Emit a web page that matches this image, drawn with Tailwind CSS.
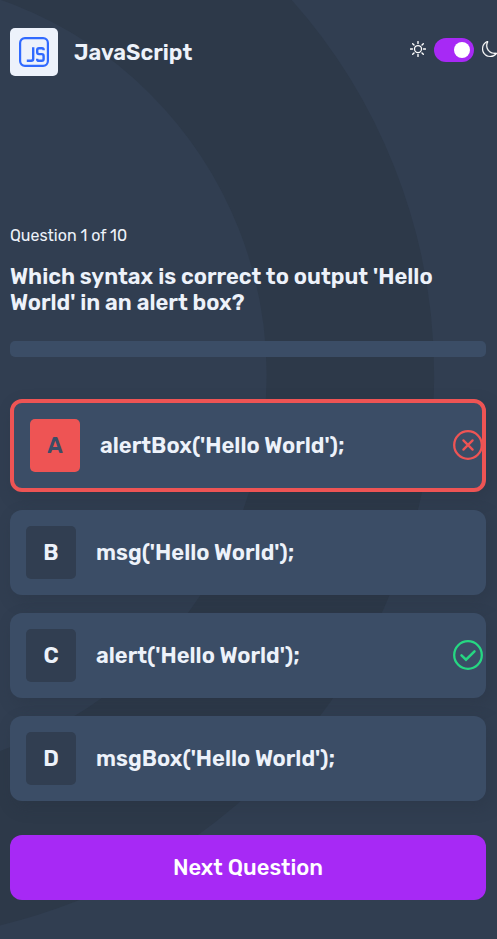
<!DOCTYPE html>
<html lang="en">
<head>
<meta charset="utf-8">
<title>Quiz</title>
<script src="https://cdn.jsdelivr.net/npm/@tailwindcss/browser@4"></script>
</head>
<body class="relative h-[939px] overflow-hidden bg-[#313e51] font-['Rubik','Roboto',sans-serif] text-[#edf2fa]">
<svg class="absolute inset-0 -z-10" width="497" height="939" fill="none"><circle cx="-131.3" cy="375.3" r="481.7" stroke="#2d3949" stroke-width="167.5"/></svg>
<header class="flex h-12 mt-7 ml-2.5 w-[488px] justify-between">
  <div class="flex items-center gap-4">
    <div class="flex size-12 items-center justify-center rounded-[5px] bg-[#edf2fb]">
      <svg width="30" height="30" viewBox="0 0 30 30" fill="none" stroke="#306aff"><rect x="1.1" y="1.1" width="27.8" height="27.8" rx="4.8" stroke-width="2.2"/><path d="M14.2 10.2V21.8Q14.2 23.8 12.2 23.8H7.8M24.6 13.2V12.8Q24.6 11.2 23 11.2H20Q18.2 11.2 18.2 13V15.3Q18.2 17.1 20 17.1H22.8Q24.6 17.1 24.6 19V22Q24.6 23.8 22.8 23.8H19.8Q18.2 23.8 18.2 22.2V21.8" stroke-width="2.4"/></svg>
    </div>
    <h1 class="pt-0.5 text-[22px] font-semibold leading-[26px]">JavaScript</h1>
  </div>
  <div class="mt-2.5 flex h-6 items-start gap-2">
    <svg class="mt-[3px]" width="16" height="16" viewBox="0 0 16 16" fill="none" stroke="#fff" stroke-linecap="round"><circle cx="8" cy="8" r="3.5" stroke-width="1.25"/><path d="M8 .6v1.9M8 13.5v1.9M.6 8h1.9M13.5 8h1.9M2.7 2.7L4 4M12 12l1.3 1.3M2.7 13.3L4 12M12 4l1.3-1.3" stroke-width="1.4"/></svg>
    <div class="flex h-6 w-10 items-center justify-end rounded-full bg-[#a729f5] pr-1"><span class="size-4 rounded-full bg-white"></span></div>
    <svg class="mt-[3px]" width="16" height="16" viewBox="0 0 16 16" fill="#fff" stroke="#fff" stroke-width=".25"><path d="M6 .278a.77.77 0 0 1 .08.858 7.2 7.2 0 0 0-.878 3.46c0 4.021 3.278 7.277 7.318 7.277q.792-.001 1.533-.16a.79.79 0 0 1 .81.316.73.73 0 0 1-.031.893A8.35 8.35 0 0 1 8.344 16C3.734 16 0 12.286 0 7.71 0 4.266 2.114 1.312 5.124.06A.75.75 0 0 1 6 .278M4.858 1.311A7.27 7.27 0 0 0 1.025 7.71c0 4.02 3.279 7.276 7.319 7.276a7.32 7.32 0 0 0 5.205-2.162q-.506.063-1.029.063c-4.61 0-8.343-3.714-8.343-8.29 0-1.167.242-2.278.681-3.286"/></svg>
  </div>
</header>
<main class="ml-2.5 w-[476px] pt-[150px]">
  <p class="text-base leading-[19px]">Question 1 of 10</p>
  <h2 class="mt-[19px] text-[22px] font-semibold leading-[26px]">Which syntax is correct to output 'Hello World' in an alert box?</h2>
  <div class="mt-[25px] h-4 rounded-[5px] bg-[#3b4d66]"></div>
  <div class="mt-[42px] flex flex-col gap-[18px] text-[22px] font-semibold">
    <div class="flex h-[93px] items-center rounded-xl border-4 border-[#ee5454] bg-[#3b4d66] pl-4 shadow-[4px_6px_16px_rgba(35,45,60,0.28)]">
      <span class="flex h-[53px] w-[50px] items-center justify-center rounded-[5px] bg-[#ee5454] text-[#3b4d66]">A</span>
      <span class="ml-5">alertBox('Hello World');</span>
      <svg class="-mr-[1px] mb-px ml-auto" width="30" height="30" viewBox="0 0 30 30" fill="none" stroke="#ee5454" stroke-width="2.3" stroke-linecap="round"><circle cx="15" cy="15" r="13.8"/><path d="M10.4 10.4l9.2 9.2M19.6 10.4l-9.2 9.2"/></svg>
    </div>
    <div class="flex h-[85px] items-center rounded-xl bg-[#3b4d66] pl-4 shadow-[4px_6px_16px_rgba(35,45,60,0.28)]">
      <span class="flex h-[53px] w-[50px] items-center justify-center rounded-[5px] bg-[#313e51]">B</span>
      <span class="ml-5">msg('Hello World');</span>
    </div>
    <div class="flex h-[85px] items-center rounded-xl bg-[#3b4d66] pl-4 shadow-[4px_6px_16px_rgba(35,45,60,0.28)]">
      <span class="flex h-[53px] w-[50px] items-center justify-center rounded-[5px] bg-[#313e51]">C</span>
      <span class="ml-5">alert('Hello World');</span>
      <svg class="mr-[3px] mb-px ml-auto" width="30" height="30" viewBox="0 0 30 30" fill="none" stroke="#26d782" stroke-width="2.3" stroke-linecap="round"><circle cx="15" cy="15" r="13.8"/><path d="M8.5 15.3l4.5 4.4 8.5-8.4" stroke-width="2.5"/></svg>
    </div>
    <div class="flex h-[85px] items-center rounded-xl bg-[#3b4d66] pl-4 shadow-[4px_6px_16px_rgba(35,45,60,0.28)]">
      <span class="flex h-[53px] w-[50px] items-center justify-center rounded-[5px] bg-[#313e51]">D</span>
      <span class="ml-5">msgBox('Hello World');</span>
    </div>
  </div>
  <button class="mt-[34px] flex h-[65px] w-full items-center justify-center rounded-xl bg-[#a729f5] text-[22px] font-medium text-white">Next Question</button>
</main>
</body>
</html>
